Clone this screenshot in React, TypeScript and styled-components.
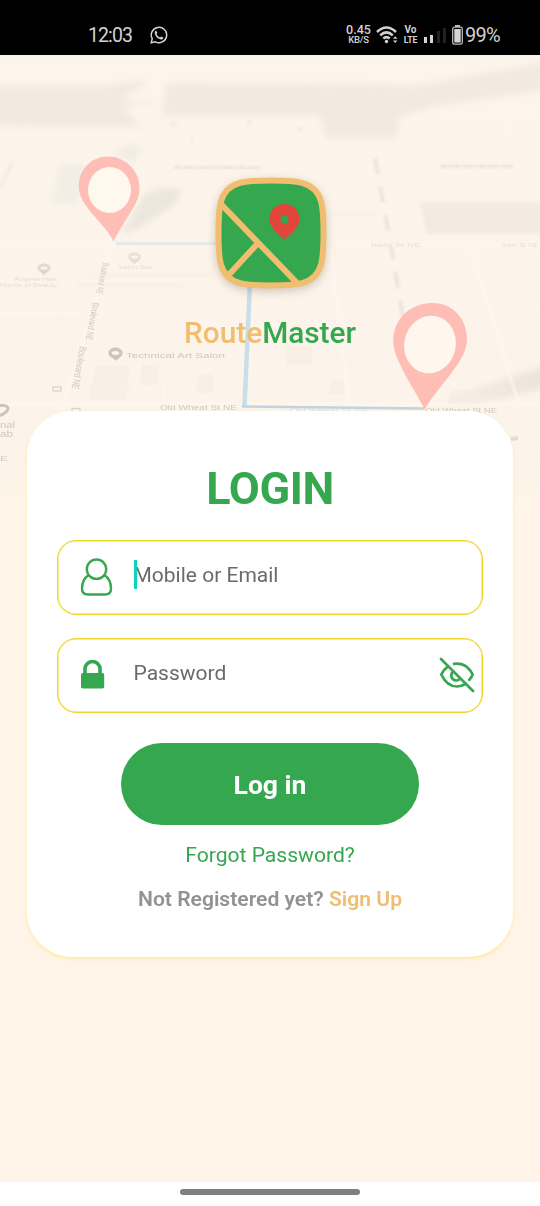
import React from "react";
import styled, { createGlobalStyle } from "styled-components";

const GREEN = "#34a74f";
const SAND = "#f1bd70";

const GlobalStyle = createGlobalStyle`
  *, *::before, *::after { box-sizing: border-box; }
  body { margin: 0; background: #fff; font-family: Roboto, "Liberation Sans", sans-serif; }
`;

const Screen = styled.div`
  display: flex;
  flex-direction: column;
  width: 540px;
  height: 1206px;
  overflow: hidden;
  background: #fff;
`;

const StatusBar = styled.header`
  flex: none;
  display: flex;
  justify-content: space-between;
  height: 55px;
  padding: 14px 38px 0 88px;
  background: #000;
  color: #d2d2d2;
`;

const StatusGroup = styled.div<{ $gap: number }>`
  display: flex;
  align-items: center;
  gap: ${(p) => p.$gap}px;
  height: 42px;
`;

const Clock = styled.span`
  width: 44px;
  font-size: 19.5px;
  letter-spacing: -0.9px;
  white-space: nowrap;
`;

const Stack = styled.div<{ $size: number; $lower: number; $width: number; $weight: number }>`
  display: flex;
  flex-direction: column;
  align-items: center;
  width: ${(p) => p.$width}px;
  font-size: ${(p) => p.$size}px;
  font-weight: ${(p) => p.$weight};
  line-height: 11px;
  white-space: nowrap;
  span {
    height: 10px;
    line-height: 10px;
  }
  small {
    height: 10px;
    font-size: ${(p) => p.$lower}px;
    line-height: 10px;
    letter-spacing: -0.2px;
  }
`;

const Percent = styled.span`
  width: 37px;
  margin-left: -3px;
  font-size: 20px;
  letter-spacing: -0.7px;
  white-space: nowrap;
`;

const Main = styled.main`
  position: relative;
  flex: 1;
  display: flex;
  flex-direction: column;
  align-items: center;
  padding-top: 122px;
  background: #fff4e7;
`;

const MapArt = styled.svg`
  position: absolute;
  top: 0;
  left: 0;
`;

const Logo = styled.svg`
  position: relative;
  flex: none;
  display: block;
  overflow: visible;
  margin-left: 1px;
  filter: drop-shadow(0 3px 5px rgba(70, 60, 40, 0.25));
`;

const Brand = styled.h1`
  position: relative;
  margin: 25px 0 0;
  height: 38px;
  font-size: 29.8px;
  font-weight: 500;
  line-height: 38px;
  color: ${GREEN};
  span { color: ${SAND}; }
`;

const Card = styled.section`
  position: relative;
  display: flex;
  flex-direction: column;
  align-items: center;
  width: 486px;
  height: 546px;
  margin-top: 59px;
  padding: 51px 30px 0;
  border-radius: 45px;
  background: #fff;
  box-shadow: 0 2px 3px rgba(255, 226, 105, 0.55);
`;

const Heading = styled.h2`
  margin: 0 0 24px;
  height: 54px;
  font-size: 45px;
  font-weight: 700;
  letter-spacing: -0.4px;
  line-height: 54px;
  color: ${GREEN};
`;

const Field = styled.div`
  display: flex;
  align-items: center;
  width: 426px;
  height: 75px;
  margin-bottom: 23px;
  padding: 0 7px 2px 21.5px;
  border: 1px solid #f0d72c;
  box-shadow: inset 0 0 0 0.5px #f0d72c;
  border-radius: 19px;
`;

const FieldIcon = styled.div`
  flex: none;
  display: flex;
  width: 54px;
`;

const Hint = styled.span`
  position: relative;
  flex: 1;
  padding-bottom: 3px;
  font-size: 21px;
  line-height: 25px;
  color: #6a6a6a;
`;

const Caret = styled.i`
  position: absolute;
  left: 0;
  top: -3px;
  width: 3px;
  height: 29px;
  background: #0fd2bd;
`;

const LoginButton = styled.button`
  width: 298px;
  height: 82px;
  margin-top: 7px;
  padding: 2px 0 0;
  border: 0;
  border-radius: 41px;
  background: ${GREEN};
  color: #fff;
  font: 700 26.5px/30px Roboto, "Liberation Sans", sans-serif;
`;

const Forgot = styled.a`
  margin-top: 17px;
  font-size: 21.1px;
  line-height: 26px;
  color: ${GREEN};
`;

const Register = styled.p`
  margin: 17px 0 0;
  font-size: 21.1px;
  font-weight: 600;
  line-height: 27px;
  color: #929292;
  white-space: nowrap;
  a { color: ${SAND}; }
`;

const NavBar = styled.footer`
  flex: none;
  display: flex;
  justify-content: center;
  height: 24px;
  padding-top: 7px;
`;

const Handle = styled.div`
  width: 180px;
  height: 6px;
  border-radius: 3px;
  background: #7f7f7f;
`;

function MapBackground() {
  return (
    <MapArt width="540" height="460" viewBox="0 55 540 460" aria-hidden="true">
      <defs>
        <linearGradient id="fade" x1="0" y1="0" x2="0" y2="1">
          <stop offset="0" stopColor="#f8f4ec" />
          <stop offset="0.025" stopColor="#fdf5ea" />
          <stop offset="0.88" stopColor="#fcf4ea" />
          <stop offset="1" stopColor="#fff4e7" />
        </linearGradient>
        <filter id="far" x="-20%" y="-20%" width="140%" height="140%"><feGaussianBlur stdDeviation="3" /></filter>
        <filter id="mid"><feGaussianBlur stdDeviation="1.6" /></filter>
        <filter id="near"><feGaussianBlur stdDeviation="0.5" /></filter>
        <linearGradient id="shade" x1="0" x2="1" y1="0" y2="0">
          <stop offset="0" stopColor="#f6efe6" />
          <stop offset="1" stopColor="#ebe4db" />
        </linearGradient>
      </defs>
      <rect y="55" width="540" height="460" fill="url(#fade)" />

      <g filter="url(#far)" fill="#f2eae0">
        <path d="M-10 86H100L150 80L120 101L160 101L122 107L142 127L-10 126Z" />
        <path d="M166 83L420 85L545 62V90L438 106L400 116L396 138H326L320 116H162Z" />
        <path d="M60 163H86L78 206L50 203Z" fill="#f3eee5" />
        <path d="M113 151L132 143L142 148L135 163L122 160Z" fill="#f2ede4" />
      </g>
      <path d="M420 202H550V234H427Z" fill="#f3ebe1" filter="url(#mid)" />
      <path d="M120 236L144 194L162 188H182L176 204L138 229Z" fill="#ece7dd" filter="url(#far)" />
      <path d="M430 408L475 389L545 366V388L490 401Z" fill="url(#shade)" filter="url(#far)" />

      <g filter="url(#mid)" stroke="#f4ece2" fill="none">
        <path d="M0 188L12 162" strokeWidth="4" />
        <path d="M90 275H215M75 285H182M65 317H60M174 168H262M330 214H376M440 165H515" strokeWidth="1.5" />
        <path d="M375 158L390 240L403 318" stroke="#eae2d8" strokeWidth="3.5" strokeDasharray="16 13" />
        <path d="M170 123L176 126M190 140L194 141M247 122L252 123M298 128L303 131" strokeWidth="5" />
      </g>
      <path d="M440 166H514M174 168H262" fill="none" stroke="#ede5db" strokeWidth="4" strokeDasharray="7 2 3 1" filter="url(#mid)" />

      <g filter="url(#near)" fill="none" stroke="#fff7ec" strokeWidth="4">
        <path d="M0 245H540M112 244L62 410M0 314H80M330 245L350 408M470 245L520 408M0 404H540" opacity="0.55" />
        <path d="M140 358L132 404M165 358L164 404M205 300V402M277 340L280 408M490 305H540" strokeWidth="1.5" opacity="0.55" />
      </g>
      <g fill="#f6ece2" opacity="0.5" filter="url(#near)">
        <path d="M96 366H130L126 400H88ZM142 365H158V385H140ZM198 374H213V393H196ZM285 345H312V365H286ZM330 380H344V394H329ZM452 390H480V404H448Z" />
      </g>

      <g filter="url(#near)" fill="#cfc8bf" fontFamily="Liberation Sans, sans-serif">
        <text x="126" y="357.5" fontSize="8" textLength="99" lengthAdjust="spacingAndGlyphs">Technical Art Salon</text>
        <text x="160" y="410" fontSize="7.5" textLength="77" lengthAdjust="spacingAndGlyphs">Old Wheat St NE</text>
        <text x="290" y="411.5" fontSize="6" opacity="0.6" textLength="78" lengthAdjust="spacingAndGlyphs">Old Wheat St NE</text>
        <text x="425" y="412.5" fontSize="7" textLength="72" lengthAdjust="spacingAndGlyphs">Old Wheat St NE</text>
        <text x="0" y="427.5" fontSize="9" textLength="15" lengthAdjust="spacingAndGlyphs">nal</text>
        <text x="0" y="436.5" fontSize="9" textLength="13" lengthAdjust="spacingAndGlyphs">ab</text>
        <text x="0" y="461" fontSize="7" textLength="8" lengthAdjust="spacingAndGlyphs">E</text>
        <text transform="translate(103 262) rotate(102)" fontSize="9" textLength="32" lengthAdjust="spacingAndGlyphs">Boulevard NE</text>
        <text transform="translate(93 302) rotate(101)" fontSize="9.5" textLength="38" lengthAdjust="spacingAndGlyphs">Boulevard NE</text>
        <text transform="translate(80 346) rotate(101)" fontSize="10" textLength="43" lengthAdjust="spacingAndGlyphs">Boulevard NE</text>
        <g opacity="0.5">
          <text x="14" y="281" fontSize="5" textLength="43" lengthAdjust="spacingAndGlyphs">Angela Hair</text>
          <text x="0" y="286.5" fontSize="5" textLength="57" lengthAdjust="spacingAndGlyphs">House of Beauty</text>
          <text x="118" y="268.5" fontSize="5" textLength="34" lengthAdjust="spacingAndGlyphs">Salon Bar</text>
          <text x="371" y="246.5" fontSize="5" textLength="50" lengthAdjust="spacingAndGlyphs">Irwin St NE</text>
          <text x="502" y="247" fontSize="5" textLength="36" lengthAdjust="spacingAndGlyphs">Irwin St NE</text>
        </g>
      </g>
      <g filter="url(#near)" fill="none" stroke="#cbc5bc">
        <ellipse cx="115.5" cy="353" rx="5.5" ry="3.7" strokeWidth="3.4" />
        <path d="M112 356.5L116 359.5L120 356" strokeWidth="2" />
        <path d="M-3 406.5C6 403 11 408 6 412Q3 415 -2 416" strokeWidth="3" />
        <ellipse cx="44" cy="268" rx="5" ry="3" strokeWidth="3" opacity="0.55" />
        <path d="M41 271L44 274L47 271" strokeWidth="2" opacity="0.55" />
        <ellipse cx="134.5" cy="257" rx="5" ry="3" strokeWidth="3" opacity="0.4" />
        <path d="M131 260L134.5 263L138 260" strokeWidth="2" opacity="0.4" />
        <rect x="53" y="387" width="8" height="4" strokeWidth="1.3" opacity="0.7" />
        <rect x="72" y="408.5" width="8" height="4" strokeWidth="1.3" opacity="0.7" />
        <path d="M511 439L518 438" strokeWidth="4" opacity="0.5" />
      </g>

      <g fill="none">
        <path d="M116 243.5H216" stroke="#e8eaea" strokeWidth="3.5" />
        <path d="M250 282L244.5 406.5" stroke="#c9deeb" strokeWidth="4.5" />
        <path d="M242 406.5L424 408.5" stroke="#bfd4e3" strokeWidth="2.6" />
      </g>

      <g filter="url(#near)">
        <path d="M113.5 241.5C108 229 96 220 87 207C80 198 78 190 79 182C81 167 93 156.5 108 156.5C125 156.5 139 170 139.5 187C140 197 135 205 130 213C124 223 118 232 113.5 241.5Z" fill="#febeb5" />
        <ellipse cx="109.5" cy="190" rx="21.5" ry="23" fill="#fff8ed" />
        <path d="M424.5 409.5C416 392 405 377 397.5 359C393 349 392 338 395 329C400 313 415 303 433 303C452 303 467 318 467 339C467 350 461 360 455 368C446 381 433 395 424.5 409.5Z" fill="#febeb5" />
        <ellipse cx="430" cy="344.5" rx="25.8" ry="29" fill="#fff7ed" transform="rotate(12 430 344.5)" />
      </g>
    </MapArt>
  );
}

const WIFI = (
  <svg width="23" height="20" viewBox="0 0 23 20" fill="none" stroke="currentColor" strokeWidth="2.5">
    <path d="M1 7Q10.5 -2 20 7" />
    <path d="M4.2 10.3Q10.5 4.4 16.8 10.3" />
    <path d="M7.3 13.5Q10.5 10.7 13.7 13.5" />
    <circle cx="10.5" cy="16.5" r="1.7" fill="currentColor" stroke="none" />
    <path d="M17 13.7L19.2 11.2L21.4 13.7ZM17 15.4L19.2 17.9L21.4 15.4Z" fill="currentColor" stroke="none" />
  </svg>
);

const TILE =
  "M56 3.5C71 3.5 80 4 87 5.8C97.500 8.600 103.400 14.500 106.200 25C108 32 108.500 41 108.500 56S108 80 106.200 87C103.400 97.500 97.500 103.400 87 106.200C80 108 71 108.500 56 108.500S32 108 25 106.200C14.500 103.400 8.600 97.500 5.800 87C4 80 3.500 71 3.500 56S4 32 5.800 25C8.600 14.500 14.500 8.600 25 5.800C32 4 41 3.500 56 3.500Z";

export default function App() {
  return (
    <>
      <GlobalStyle />
      <Screen>
        <StatusBar>
          <StatusGroup $gap={18}>
            <Clock>12:03</Clock>
            <svg width="18" height="18" viewBox="0 0 18 18" fill="none" stroke="currentColor" strokeWidth="1.5">
              <path d="M1.2 16.8L2.2 12.7A7.7 7.7 0 1 1 5.3 15.8Z" />
              <path d="M6.1 4.6L7.3 7.1L6.5 8.2Q7.7 10.7 10 11.5L11.1 10.6L13.5 11.8Q13.2 14 10.9 13.5Q5.5 12.1 4.7 7Q4.6 5 6.1 4.6Z" fill="currentColor" stroke="none" />
            </svg>
          </StatusGroup>
          <StatusGroup $gap={5}>
            <Stack $size={12.5} $lower={9.5} $width={25} $weight={500}>
              <span>0.45</span><small>KB/S</small>
            </Stack>
            {WIFI}
            <Stack $size={10} $lower={8.8} $width={13} $weight={700}>
              <span>Vo</span><small>LTE</small>
            </Stack>
            <svg width="25" height="18" viewBox="-2 0 25 18">
              <path d="M0 11H3V17H0ZM6 9H9V17H6Z" fill="#d5d5d5" />
              <path d="M13 5H16V17H13ZM19 2H22V17H19Z" fill="#222" />
            </svg>
            <svg width="11" height="20" viewBox="0 0 11 20">
              <path d="M3 0H8V2H3Z" fill="#bbb" />
              <rect x="0.7" y="2.2" width="9.6" height="17" rx="1.8" fill="none" stroke="#bbb" strokeWidth="1.3" />
              <rect x="2.3" y="4" width="6.4" height="13.5" fill="#d5d5d5" />
            </svg>
            <Percent>99%</Percent>
          </StatusGroup>
        </StatusBar>

        <Main>
          <MapBackground />
          <Logo width="112" height="112" viewBox="0 0 112 112">
            <clipPath id="tile"><path d={TILE} /></clipPath>
            <path d={TILE} fill={GREEN} />
            <path d="M3 24L84 108M44 65L9 103" fill="none" stroke={SAND} strokeWidth="6" clipPath="url(#tile)" />
            <path d={TILE} fill="none" stroke={SAND} strokeWidth="6" />
            <path fillRule="evenodd" d="M69.5 27C78 27 84.5 33.5 84.5 42C84.5 51 75 58 69.5 62.5C64 58 54.5 51 54.5 42C54.5 33.5 61 27 69.5 27ZM69.5 38.5A4 4 0 1 0 69.5 46.5A4 4 0 1 0 69.5 38.5Z" fill="#e24539" />
          </Logo>
          <Brand><span>Route</span>Master</Brand>

          <Card>
            <Heading>LOGIN</Heading>
            <Field>
              <FieldIcon>
                <svg width="33" height="38" viewBox="-0.5 0 33 38" fill="none" stroke={GREEN} strokeWidth="2.4">
                  <circle cx="16" cy="11.2" r="9.7" />
                  <path d="M8.2 17C3.5 20 1.5 25 1.5 30.5C1.5 34.5 3.8 36.5 7.5 36.5H24.5C28.2 36.5 30.5 34.5 30.5 30.5C30.5 25 28.5 20 23.8 17" />
                </svg>
              </FieldIcon>
              <Hint><Caret />Mobile or Email</Hint>
            </Field>
            <Field>
              <FieldIcon>
                <svg width="25" height="30" viewBox="-0.5 0.5 25 30">
                  <path d="M4.5 14V9.5a7.5 7.5 0 0 1 15 0V14" fill="none" stroke={GREEN} strokeWidth="3.6" />
                  <rect x="0.5" y="13.5" width="23.2" height="15.5" rx="1.8" fill={GREEN} />
                </svg>
              </FieldIcon>
              <Hint>Password</Hint>
              <svg width="36" height="36" viewBox="0 0 36 36" fill="none" stroke={GREEN} strokeWidth="2.7" strokeLinecap="round" strokeLinejoin="round">
                <path d="M2 2L34 34" />
                <path d="M9 9.3Q4.5 12.5 2.3 17.5Q8 29.5 18 29.5Q22.5 29.5 26.5 26.8" />
                <path d="M15 6.8Q27.5 4.8 33.7 17.5Q32.5 20.5 30.3 22.7" />
                <path d="M14.3 14.5A5 5 0 1 0 21.3 21.5" />
              </svg>
            </Field>
            <LoginButton>Log in</LoginButton>
            <Forgot>Forgot Password?</Forgot>
            <Register>Not Registered yet? <a>Sign Up</a></Register>
          </Card>
        </Main>

        <NavBar><Handle /></NavBar>
      </Screen>
    </>
  );
}
